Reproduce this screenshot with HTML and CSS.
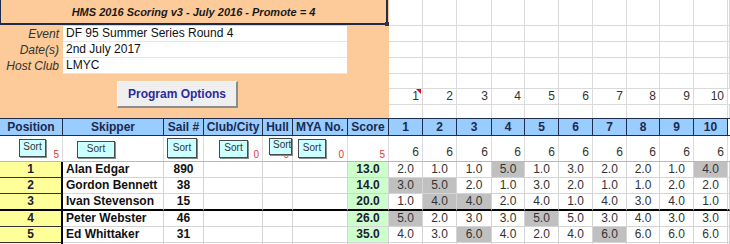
FILE: index.html
```html
<!DOCTYPE html>
<html>
<head>
<meta charset="utf-8">
<link rel="stylesheet" href="styles.css">
</head>
<body>
<div class="sheet">
  <div class="top">
    <div class="panel">
      <div class="title">HMS 2016 Scoring v3 - July 2016 - Promote = 4</div>
      <div class="handle"></div>
      <div class="info">
        <div class="lbl">Event</div><div class="val">DF 95 Summer Series Round 4</div>
        <div class="lbl">Date(s)</div><div class="val">2nd July 2017</div>
        <div class="lbl">Host Club</div><div class="val">LMYC</div>
      </div>
      <div class="opts">Program Options</div>
    </div>
    <div class="tgrid">
      <div></div><div></div><div></div><div></div><div></div><div></div><div></div><div></div><div></div><div></div><div></div>
      <div></div><div></div><div></div><div></div><div></div><div></div><div></div><div></div><div></div><div></div><div></div>
      <div></div><div></div><div></div><div></div><div></div><div></div><div></div><div></div><div></div><div></div><div></div>
      <div></div><div></div><div></div><div></div><div></div><div></div><div></div><div></div><div></div><div></div><div></div>
      <div></div><div></div><div></div><div></div><div></div><div></div><div></div><div></div><div></div><div></div><div></div>
      <div class="num cmt">1</div><div class="num">2</div><div class="num">3</div><div class="num">4</div><div class="num">5</div><div class="num">6</div><div class="num">7</div><div class="num">8</div><div class="num">9</div><div class="num">10</div><div class="num"></div>
      <div class="last"></div><div class="last"></div><div class="last"></div><div class="last"></div><div class="last"></div><div class="last"></div><div class="last"></div><div class="last"></div><div class="last"></div><div class="last"></div><div class="last"></div>
    </div>
  </div>

  <div class="row head">
    <div>Position</div><div>Skipper</div><div>Sail #</div><div>Club/City</div><div>Hull</div><div>MYA No.</div><div>Score</div>
    <div>1</div><div>2</div><div>3</div><div>4</div><div>5</div><div>6</div><div>7</div><div>8</div><div>9</div><div>10</div><div class="fill"></div>
  </div>

  <div class="row sorts">
    <div class="sc"><span class="btn b-pos">Sort</span><span class="cnt">5</span></div>
    <div class="sc"><span class="btn b-skip">Sort</span></div>
    <div class="sc"><span class="btn b-sail">Sort</span></div>
    <div class="sc"><span class="cnt">0</span><span class="btn b-club">Sort</span></div>
    <div class="sc"><span class="cnt">0</span><span class="btn b-hull">Sort</span></div>
    <div class="sc"><span class="cnt">0</span><span class="btn b-mya">Sort</span></div>
    <div class="sc"><span class="cnt">5</span></div>
    <div class="six">6</div><div class="six">6</div><div class="six">6</div><div class="six">6</div><div class="six">6</div>
    <div class="six">6</div><div class="six">6</div><div class="six">6</div><div class="six">6</div><div class="six">6</div><div class="six"></div>
  </div>

  <div class="row data">
    <div class="pos">1</div><div class="name">Alan Edgar</div><div class="sail">890</div><div></div><div></div><div></div><div class="score">13.0</div>
    <div class="r">2.0</div><div class="r">1.0</div><div class="r">1.0</div><div class="r g">5.0</div><div class="r">1.0</div><div class="r">3.0</div><div class="r">2.0</div><div class="r">2.0</div><div class="r">1.0</div><div class="r g">4.0</div><div></div>
  </div>
  <div class="row data">
    <div class="pos">2</div><div class="name">Gordon Bennett</div><div class="sail">38</div><div></div><div></div><div></div><div class="score">14.0</div>
    <div class="r g">3.0</div><div class="r g">5.0</div><div class="r">2.0</div><div class="r">1.0</div><div class="r">3.0</div><div class="r">2.0</div><div class="r">1.0</div><div class="r">1.0</div><div class="r">2.0</div><div class="r">2.0</div><div></div>
  </div>
  <div class="row data sep">
    <div class="pos">3</div><div class="name">Ivan Stevenson</div><div class="sail">15</div><div></div><div></div><div></div><div class="score">20.0</div>
    <div class="r">1.0</div><div class="r g">4.0</div><div class="r g">4.0</div><div class="r">2.0</div><div class="r">4.0</div><div class="r">1.0</div><div class="r">4.0</div><div class="r">3.0</div><div class="r">4.0</div><div class="r">1.0</div><div></div>
  </div>
  <div class="row data">
    <div class="pos">4</div><div class="name">Peter Webster</div><div class="sail">46</div><div></div><div></div><div></div><div class="score">26.0</div>
    <div class="r g">5.0</div><div class="r">2.0</div><div class="r">3.0</div><div class="r">3.0</div><div class="r g">5.0</div><div class="r">5.0</div><div class="r">3.0</div><div class="r">4.0</div><div class="r">3.0</div><div class="r">3.0</div><div></div>
  </div>
  <div class="row data">
    <div class="pos">5</div><div class="name">Ed Whittaker</div><div class="sail">31</div><div></div><div></div><div></div><div class="score">35.0</div>
    <div class="r">4.0</div><div class="r">3.0</div><div class="r g">6.0</div><div class="r">4.0</div><div class="r">2.0</div><div class="r">4.0</div><div class="r g">6.0</div><div class="r">6.0</div><div class="r">6.0</div><div class="r">6.0</div><div></div>
  </div>
  <div class="row data tail">
    <div class="pos"></div><div></div><div></div><div></div><div></div><div></div><div class="score"></div>
    <div></div><div></div><div></div><div></div><div></div><div></div><div></div><div></div><div></div><div></div><div></div>
  </div>
</div>
</body>
</html>
```

FILE: styles.css
```css
* { box-sizing: border-box; margin: 0; padding: 0; }
html, body { margin: 0; background: #fff; }
body {
  width: 730px;
  height: 244px;
  overflow: hidden;
  font-family: "Liberation Sans", Arial, sans-serif;
  font-size: 12px;
  color: #1a1a1a;
}
.sheet { width: 730px; height: 244px; overflow: hidden; }

/* ---------- top area ---------- */
.top { display: flex; height: 118px; }
.panel {
  position: relative;
  flex: none;
  width: 389px;
  background: #fdcb99;
  display: flex;
  flex-direction: column;
}
.title {
  width: 388px;
  height: 25px;
  border-left: 1px solid #1f2d4d;
  border-right: 2px solid #1f2d4d;
  border-bottom: 2px solid #1f2d4d;
  font-style: italic;
  font-weight: bold;
  font-size: 11px;
  line-height: 25px;
  text-align: center;
  color: #1a1a1a;
}
.handle {
  position: absolute;
  left: 385px;
  top: 22px;
  width: 4px;
  height: 4px;
  background: #2a3550;
}
.info {
  display: grid;
  grid-template-columns: 63px 284px;
  grid-auto-rows: 16px;
  margin-top: 1px;
}
.lbl {
  font-style: italic;
  text-align: right;
  padding-right: 4px;
  line-height: 16px;
  color: #333;
}
.val {
  background: #fff;
  border-bottom: 1px solid #e6e6e6;
  padding-left: 3px;
  line-height: 15px;
  color: #111;
}
.opts {
  margin: 7px 0 0 117px;
  width: 121px;
  height: 27px;
  background: #efefef;
  border-top: 1px solid #fafafa;
  border-left: 1px solid #fafafa;
  border-right: 2px solid #8c8c8c;
  border-bottom: 2px solid #8c8c8c;
  font-weight: bold;
  font-size: 12px;
  color: #2b2b9c;
  display: flex;
  align-items: center;
  justify-content: center;
}

.tgrid {
  display: grid;
  grid-template-columns: 34px 34px 35px 33px 34px 34px 34px 33px 34px 34px 2px;
  grid-template-rows: 26px 16px 16px 16px 15px 16px 13px;
  width: 341px;
}
.tgrid > div {
  border-right: 1px solid #dadada;
  border-bottom: 1px solid #dadada;
}
.tgrid > div.last { border-bottom: none; }
.tgrid .num {
  text-align: right;
  padding-right: 3px;
  line-height: 15px;
  color: #333;
  position: relative;
}
.tgrid .cmt::after {
  content: "";
  position: absolute;
  right: 1px;
  top: 0;
  border-top: 5px solid #d0102a;
  border-left: 5px solid transparent;
}

/* ---------- table rows ---------- */
.row {
  display: grid;
  grid-template-columns: 63px 101px 40px 59px 30px 55px 41px 34px 34px 35px 33px 34px 34px 34px 33px 34px 34px 2px;
}
.head {
  height: 18px;
  border-top: 1px solid #1f2d4d;
  border-bottom: 1px solid #1f2d4d;
  background: #99ccff;
}
.head > div {
  border-right: 1px solid #1f2d4d;
  font-weight: bold;
  font-size: 12px;
  line-height: 16px;
  text-align: center;
  color: #1b2a4e;
}
.head > .fill { background: #fff; border-right: none; }

.sorts {
  height: 26px;
  border-bottom: 1px solid #b8b8b8;
}
.sorts > div { border-right: 1px solid #dcdcdc; }
.sc { display: grid; }
.sc > span { grid-area: 1 / 1; }
.btn {
  justify-self: start;
  align-self: start;
  background: #ccffff;
  border: 1px solid #4a4a4a;
  box-shadow: 1px 1px 0 #8a8a8a;
  font-size: 10px;
  color: #333;
  text-align: center;
  white-space: nowrap;
  overflow: hidden;
}
.b-pos  { margin: 3px 0 0 19px; width: 27px; height: 18px; line-height: 14px; }
.b-skip { margin: 5px 0 0 14px; width: 38px; height: 17px; line-height: 14px; }
.b-sail { margin: 2px 0 0 3px;  width: 30px; height: 20px; line-height: 17px; }
.b-club { margin: 4px 0 0 15px; width: 29px; height: 18px; line-height: 14px; }
.b-hull { margin: 2px 0 0 6px;  width: 23px; height: 17px; line-height: 12px; text-align: left; padding: 0 2px 0 3px; }
.b-mya  { margin: 3px 0 0 5px;  width: 28px; height: 19px; line-height: 15px; }
.cnt {
  justify-self: end;
  align-self: end;
  margin: 0 3px 1px 0;
  font-size: 10px;
  line-height: 10px;
  color: #e0383a;
}
.six {
  display: flex;
  align-items: flex-end;
  justify-content: flex-end;
  padding: 0 3px 2px 0;
  color: #333;
  line-height: 14px;
}

.data { height: 16px; }
.data.sep { height: 17px; }
.data.tail { height: 2px; overflow: hidden; }
.data > div {
  border-right: 1px solid #d4d4d4;
  border-bottom: 1px solid #d4d4d4;
  line-height: 15px;
  white-space: nowrap;
}
.data.sep > div { border-bottom: 2px solid #000; }
.data > .pos {
  background: #ffff99;
  border-right: 2px solid #000;
  border-bottom-color: #333;
  font-weight: bold;
  text-align: center;
  color: #1b2033;
}
.name { font-weight: bold; padding-left: 3px; color: #111; }
.sail { font-weight: bold; text-align: center; color: #111; }
.data > .score {
  background: #ccffcc;
  font-weight: bold;
  text-align: center;
  color: #1b2033;
}
.r { text-align: center; color: #333; }
.data > .g { background: #c0c0c0; }
```
